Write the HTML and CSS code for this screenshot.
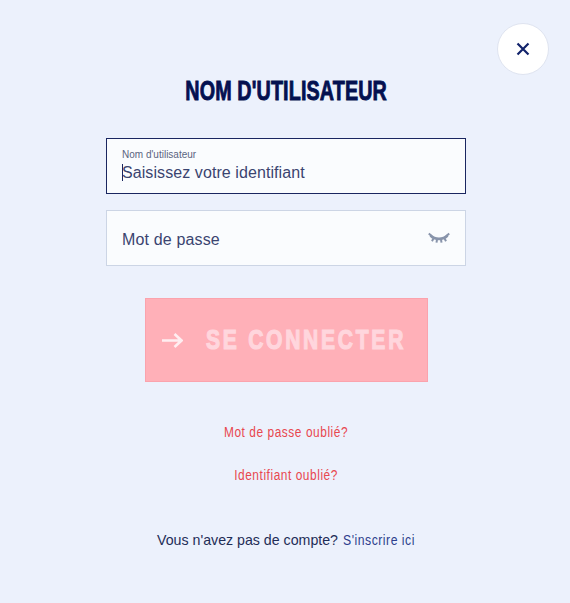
FILE: index.html
```html
<!DOCTYPE html>
<html lang="fr">
<head>
<meta charset="utf-8">
<title>Connexion</title>
<link rel="stylesheet" href="styles.css">
</head>
<body>
<main class="dialog">
  <button class="close" aria-label="Fermer">
    <svg width="14" height="14" viewBox="0 0 14 14"><path d="M1.5 1.5l11 11M12.5 1.5l-11 11" fill="none" stroke="#12236b" stroke-width="2.2"/></svg>
  </button>
  <h1 class="title">NOM D'UTILISATEUR</h1>
  <form class="form">
    <div class="field field-active">
      <span class="field-label">Nom d'utilisateur</span>
      <span class="field-value"><span class="caret"></span>Saisissez votre identifiant</span>
    </div>
    <div class="field field-idle">
      <span class="field-placeholder">Mot de passe</span>
      <svg class="eye" width="22" height="13" viewBox="0 0 22 13"><g fill="none" stroke="#8894ab" stroke-width="2"><path d="M2.5 3.5C7 8 15 8 19.5 3.5" stroke-width="2.6"/><path d="M.8 1.5l3 2.8M21.200 1.500l-3 2.800M5.400 6.500l-1.400 2.700M16.600 6.500l1.400 2.700M9 7.500l-.5 3.200M13 7.500l.5 3.200"/></g></svg>
    </div>
    <button class="submit" type="button">
      <svg class="arrow" width="21" height="15" viewBox="0 0 21 15"><path d="M0 7.500h19M12.500 1L19.500 7.500l-7 6.500" fill="none" stroke="#ffeef1" stroke-width="2.6"/></svg>
      <span class="submit-text">SE CONNECTER</span>
    </button>
  </form>
  <a class="link-red link-first">Mot de passe oublié?</a>
  <a class="link-red link-second">Identifiant oublié?</a>
  <p class="signup">Vous n'avez pas de compte? <a class="signup-link">S'inscrire ici</a></p>
</main>
</body>
</html>
```
FILE: styles.css
```css
* { box-sizing: border-box; }
html, body { margin: 0; height: 100%; }
body { background: #ecf1fc; font-family: "Liberation Sans", Arial, sans-serif; color: #1b2a57; overflow: hidden; }
.dialog { position: relative; height: 603px; display: flex; flex-direction: column; align-items: center; padding: 75px 0 0 2px; }
.close { position: absolute; top: 23px; right: 21px; width: 52px; height: 52px; border-radius: 50%; background: #fff; border: 1px solid #dfe4f0; display: flex; align-items: center; justify-content: center; padding: 0; }
.title { margin: 0; font-size: 27px; line-height: 32px; font-weight: 700; letter-spacing: .2px; white-space: nowrap; color: #041150; -webkit-text-stroke: .9px #041150; transform: scaleX(.73); }
.form { display: flex; flex-direction: column; align-items: center; margin-top: 31px; width: 360px; }
.field { width: 360px; height: 56px; background: #fafcfe; display: flex; }
.field-active { border: 1px solid #1a2660; flex-direction: column; padding: 10px 15px 0; }
.field-idle { border: 1px solid #ccd5e5; margin-top: 16px; align-items: center; justify-content: space-between; padding: 0 15px 0; }
.field-label { font-size: 10px; line-height: 11px; color: #5a6480; }
.field-value { font-size: 16px; line-height: 18px; margin-top: 4px; letter-spacing: .08px; color: #3a4470; position: relative; }
.caret { position: absolute; left: 0; top: 0; width: 1px; height: 17px; background: #1a2660; }
.field-placeholder { font-size: 16px; letter-spacing: .15px; color: #3a4470; margin-top: 4px; }
.submit { margin-top: 32px; width: 283px; height: 84px; background: #ffb0b8; border: 1px solid #fba3ad; display: flex; align-items: center; padding: 0 0 0 16px; }
.arrow { flex: none; }
.submit-text { margin-left: 23px; font-weight: 700; font-size: 27px; letter-spacing: 3.5px; white-space: nowrap; color: #ffd6dd; -webkit-text-stroke: 1.2px #ffd6dd; transform: scaleX(.78); transform-origin: left center; }
.link-red { font-size: 14px; letter-spacing: .65px; line-height: 16px; white-space: nowrap; color: #e8474f; transform: scaleX(.85); }
.link-first { margin-top: 42px; }
.link-second { margin-top: 27px; }
.signup { margin: 48px 0 0; display: flex; font-size: 14.2px; line-height: 18px; white-space: pre; color: #1f2d57; }
.signup-link { display: block; width: 72px; margin-left: 1px; letter-spacing: .6px; color: #2d3e8c; transform: scaleX(.86); transform-origin: left center; }
```
